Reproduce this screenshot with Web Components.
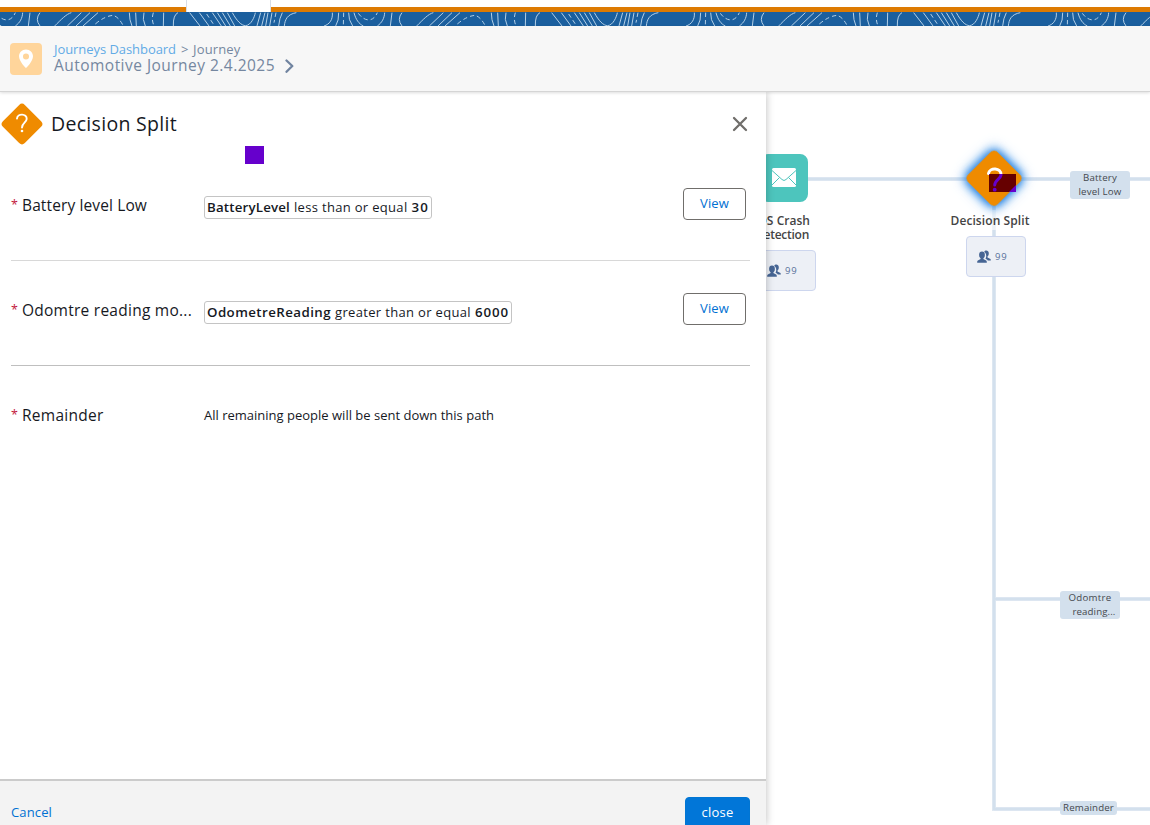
<!DOCTYPE html>
<html lang="en">
<head>
<meta charset="utf-8">
<title>Journey – Decision Split</title>
<style>
html,body{margin:0;height:100%;overflow:hidden;background:#fff}
body{font-family:"Open Sans","Noto Sans",sans-serif;color:#16191f}
</style>
</head>
<body>
<journey-app></journey-app>
<script>
const define = (name, html, setup) => customElements.define(name, class extends HTMLElement {
  constructor(){
    super();
    const t = document.createElement('template');
    t.innerHTML = html;
    this.attachShadow({mode:'open'}).append(t.content.cloneNode(true));
  }
  connectedCallback(){ if (setup) setup(this, this.shadowRoot); }
});

/* One line of text whose tracking is adjusted to fill the given width. */
define('fit-text', `<style>:host{display:inline-block;white-space:pre;line-height:inherit}span{display:inline-block}</style><span><slot></slot></span>`, (el, root) => {
  const s = root.querySelector('span'), w = +el.getAttribute('w');
  const n = el.textContent.length;
  s.style.letterSpacing = ((w - s.getBoundingClientRect().width) / n) + 'px';
});

define('top-band', `<style>
:host{display:flex;flex-direction:column;height:26px;flex:none}
.tabs{height:12px;display:flex;box-sizing:border-box;background:linear-gradient(#fff 7px,#dd7a01 7px)}
.tab{margin-left:186px;width:83px;background:#fff;border:solid #d8dde6;border-width:0 1px}
svg{display:block;width:100%;height:14px;background:#1b5f9e}
</style>
<div class="tabs"><div class="tab"></div></div>
<svg viewBox="0 12 1150 14" preserveAspectRatio="none"><defs><g id="t" fill="none" stroke="#b4d0e7" stroke-width="3">
<path d="M50 78C70 58 85 42 100 38M88 78L130 38M114 78L156 38M135 78L180 38M274 38Q274 60 282 78M293 38L295 78M318 38Q312 58 322 78M377 38L376 78M420 38Q405 45 406 78M455 38L486 78M484 38L513 78M523 38L550 78M538 38L563 78M553 38L577 78M568 38L590 78M583 38C596 62 610 77 623 77C640 75 650 50 652 38M668 38L657 78M681 38L671 78M690 38L683 78M702 38L695 78M733 38Q724 55 722 78M775 38C748 43 741 58 739 78M883 38C885 58 875 73 858 78M902 38Q903 62 893 78M932 38Q931 60 944 78M948 38C953 58 963 72 976 78M1018 78C1032 68 1039 55 1040 38M1062 38L1057 78M1092 38Q1076 58 1092 78"/>
<path stroke-dasharray="13 9" d="M172 72Q200 48 226 46Q243 52 256 78M346 38Q340 58 347 75M506 42L530 78M714 38L708 68M917 38L916 78M961 40C980 66 1006 67 1018 38"/></g></defs>
<g><use href="#t" transform="translate(-324) scale(.33333)"/><use href="#t" transform="translate(38) scale(.33333)"/><use href="#t" transform="translate(400) scale(.33333)"/><use href="#t" transform="translate(762) scale(.33333)"/><use href="#t" transform="translate(1124) scale(.33333)"/></g></svg>`);

define('journey-header', `<style>
:host{display:flex;box-sizing:border-box;height:66px;flex:none;background:#f7f7f7;border-bottom:1px solid #d5d5d5;padding:17px 10px 0;gap:12px;color:#7587a0;box-shadow:0 1px 3px #0002}
svg{display:block;flex:none}
.txt{display:flex;flex-direction:column}
.crumb{font-size:13px;line-height:14px;white-space:pre;display:flex;margin-top:-1px;gap:5px}
.a{color:#62abe6}.name{font-size:15.500px;line-height:19px;display:flex;gap:10px;align-items:center}
</style>
<svg width="32" height="32" viewBox="0 0 32 32"><rect width="32" height="32" rx="4" fill="#ffd59b"/><path fill="#fff" fill-rule="evenodd" d="M16 6.500c-4 0-7 3-7 6.800 0 5.200 7 11.900 7 11.900s7-6.700 7-11.900c0-3.800-3-6.800-7-6.800zm0 4a3 3 0 1 1 0 6.100 3 3 0 0 1 0-6.100z"/></svg>
<div class="txt"><div class="crumb"><fit-text class="a" w="122">Journeys Dashboard</fit-text><fit-text w="7">&gt;</fit-text><fit-text w="47.500">Journey</fit-text></div>
<div class="name"><fit-text w="221">Automotive Journey 2.4.2025</fit-text><svg width="10" height="14" viewBox="0 0 10 14"><path d="M1.500 1.500L7.300 7 1.500 12.800" fill="none" stroke="#7184a0" stroke-width="2.300" stroke-linecap="round" stroke-linejoin="round"/></svg></div></div>`);

define('split-row', `<style>
:host{display:flex;box-sizing:border-box;height:105px;border-bottom:1px solid var(--rule,#d8d8d8);align-items:flex-start}
.label{width:193px;flex:none;padding-top:38px;font-size:15.500px;line-height:22px;display:flex}
.star{width:11px;font-size:12.500px;color:#c2183c}
.body{flex:1;padding-top:40px;font-size:13px}
</style><div class="label"><span class="star">*</span><slot name="label"></slot></div><div class="body"><slot></slot></div><slot name="action"></slot>`);

define('rule-chip', `<style>:host{display:inline-flex;box-sizing:border-box;height:23px;border:1px solid #c4c4c4;border-radius:3px;padding:0 2px;line-height:21px;white-space:pre;font-size:13px;gap:4px}</style><slot></slot>`);

define('ui-button', `<style>:host{display:flex;box-sizing:border-box;width:63px;height:32px;border:1px solid #706e6b;border-radius:4px;background:#fff;color:#0070d2;justify-content:center;font-size:13px;line-height:29px;margin:32px 4px 0 0}
:host([brand]){width:65px;border-color:#0176d3;background:#0176d8;color:#fff;margin:0}</style><slot></slot>`);

define('split-panel', `<style>
:host{display:flex;flex-direction:column;position:relative;z-index:2;width:766px;height:733px;background:#fff;box-shadow:0 0 8px #0004;flex:none}
header{display:flex;height:64px;align-items:flex-start;flex:none}
.icon{margin:11px 0 0 1px}
h1{font-weight:400;font-size:19.500px;line-height:28px;margin:18px 0 0 8px;flex:1}
.x{margin:24px 18px 0 0}
main{padding:0 16px 0 11px;flex:1}
footer{height:46px;flex:none;box-sizing:border-box;background:#f3f3f3;border-top:2px solid #cbcbcb;display:flex;justify-content:space-between;align-items:flex-start;padding:16px 16px 0 11px;font-size:13px;overflow:hidden}
.cancel{color:#0070d2;line-height:30px}
.mark{position:absolute;left:245px;top:54px;width:19px;height:18px;background:#60c}
b{font-weight:650;font-size:13.300px}
.plain{display:block;line-height:19px}
</style>
<header><svg class="icon" width="42" height="42" viewBox="-21 -21 42 42"><rect x="-15.500" y="-15.500" width="31" height="31" rx="4" transform="rotate(45)" fill="#ef8b00"/><path d="M-5-5.500C-4.500-11 5-10.500 4.700-5 4.500-1.500 0-1 0 3.500" fill="none" stroke="#fff" stroke-width="1.900" stroke-linecap="round"/><circle cy="7" r="1.300" fill="#fff"/></svg>
<h1><fit-text w="126">Decision Split</fit-text></h1>
<svg class="x" width="16" height="16"><path d="M2 2L14 14M14 2L2 14" stroke="#706e6b" stroke-width="2.300" stroke-linecap="round"/></svg></header>
<div class="mark"></div>
<main>
<split-row><fit-text slot="label" w="125">Battery level Low</fit-text><rule-chip><fit-text w="83"><b>BatteryLevel</b></fit-text><fit-text w="113.500">less than or equal</fit-text><fit-text w="17.500"><b>30</b></fit-text></rule-chip><ui-button slot="action"><fit-text w="29">View</fit-text></ui-button></split-row>
<split-row style="--rule:#bfbfbf"><fit-text slot="label" w="170">Odomtre reading mo...</fit-text><rule-chip><fit-text w="124"><b>OdometreReading</b></fit-text><fit-text w="136">greater than or equal</fit-text><fit-text w="34"><b>6000</b></fit-text></rule-chip><ui-button slot="action"><fit-text w="29">View</fit-text></ui-button></split-row>
<split-row style="--rule:transparent"><fit-text slot="label" w="81.500">Remainder</fit-text><span class="plain"><fit-text w="290">All remaining people will be sent down this path</fit-text></span></split-row>
</main>
<footer><span class="cancel"><fit-text w="41">Cancel</fit-text></span><ui-button brand><fit-text w="32">close</fit-text></ui-button></footer>`);

define('people-count', `<style>:host{position:absolute;box-sizing:border-box;width:60px;height:41px;border:1px solid #cdd6ee;border-radius:4px;background:#edf0f6;display:flex;align-items:center;padding-left:10px;gap:4px;color:#56709a;font-size:9.500px}svg{display:block}fit-text{margin-top:-1px}</style>
<svg width="14" height="14" viewBox="0 0 14 14" fill="#466594"><ellipse cx="5" cy="5" rx="2.900" ry="3.400"/><path d="M3.600 7h2.800v2l2.700 1.500c.5.300.7.800.7 1.400v.8H.2v-.8c0-.6.200-1.100.7-1.400L3.600 9z"/><path d="M7.200 1.800C8-.2 12 0 11.800 3.500c0 1.400-.5 2.400-1.300 3v1l2.500 1.300c.6.300.8.700.8 1.800h-3c-.4-.9-1.100-1.200-2.300-1.900.8-1.100 1.600-4.600-1.300-6.900z"/></svg><fit-text w="12.500">99</fit-text>`);

define('path-tag', `<style>:host{position:absolute;box-sizing:border-box;background:#d3e0ed;border-radius:3px;width:60px;font-size:9.700px;line-height:14px;color:#45484d;display:flex;flex-direction:column;align-items:center}</style><slot></slot>`);

define('journey-canvas', `<style>
:host{display:block;position:relative;flex:1;height:733px;background:#fff}
.lines{position:absolute;left:0;top:0}
.name{position:absolute;font-weight:650;font-size:12px;line-height:14px;color:#444;display:flex;flex-direction:column;align-items:center;width:90px}
.mail,.split{position:absolute;display:block}
</style>
<svg class="lines" width="384" height="733" fill="none"><path d="M40 87H384M226 507H384M226 717H384" stroke="#e0e9f2" stroke-width="4"/><path d="M228 87V718" stroke="#e0e9f2" stroke-width="4"/><path d="M40 87H384M228 507H384M228 717H384M228 87V718" stroke="#d3e0ed" stroke-width="2.400"/><path d="M228 118V138" stroke="#fff" stroke-opacity=".6" stroke-width="5"/></svg>
<svg class="mail" style="left:-6px;top:62px" width="48" height="48"><rect width="48" height="48" rx="8" fill="#4dc5bd"/><rect x="12" y="14" width="24" height="19" rx="1.500" fill="#fff"/><path d="M12 16.500L22 25.500Q24 27.500 26 25.500L36 16.500M12 31L19.500 23.500M36 31L28.500 23.500" fill="none" stroke="#4dc5bd"/></svg>
<div class="name" style="left:-29px;top:122px"><fit-text w="56">iOS Crash</fit-text><fit-text w="54">Detection</fit-text></div>
<people-count style="left:-10px;top:158px"></people-count>
<svg class="split" style="left:188px;top:47px;overflow:visible" width="80" height="80" viewBox="-40 -40 80 80"><defs><clipPath id="c"><rect x="-5" y="-5" width="27" height="18"/></clipPath><g id="q"><path d="M-5.500-5.500C-4.500-12 7.500-11.500 7-4 6.600 0 .7 1 .7 6" fill="none" stroke="currentColor" stroke-width="3" stroke-linecap="round"/><circle cx=".7" cy="10.700" r="1.900" fill="currentColor"/></g></defs>
<rect x="-20.900" y="-20.900" width="41.800" height="41.800" rx="5" transform="translate(0 -.7) rotate(45)" fill="#ef8b00" style="filter:drop-shadow(0 0 4px #1679df) drop-shadow(0 0 6px #3a91e8)"/>
<g style="color:#fff"><use href="#q"/></g><g clip-path="url(#c)"><rect x="-5" y="-5" width="27" height="18" fill="#600"/><path d="M22 6L15 13H22Z" fill="#60c"/><g style="color:#60c"><use href="#q"/></g></g></svg>
<div class="name" style="left:179px;top:122px"><fit-text w="79">Decision Split</fit-text></div>
<people-count style="left:200px;top:144px"></people-count>
<path-tag style="left:304px;top:79px;height:28px"><fit-text w="34">Battery</fit-text><fit-text w="43">level Low</fit-text></path-tag>
<path-tag style="left:294px;top:499px;height:28px"><fit-text w="43">Odomtre</fit-text><fit-text w="43" style="margin-left:8px">reading...</fit-text></path-tag>
<path-tag style="left:294px;top:709px;height:14px;width:57px"><fit-text w="51">Remainder</fit-text></path-tag>`);

define('journey-app', `<style>:host{display:flex;flex-direction:column;width:1150px;height:825px;overflow:hidden}.work{display:flex;flex:1;min-height:0}journey-header{position:relative;z-index:3}</style>
<top-band></top-band><journey-header></journey-header><div class="work"><split-panel></split-panel><journey-canvas></journey-canvas></div>`);
</script>
</body>
</html>
